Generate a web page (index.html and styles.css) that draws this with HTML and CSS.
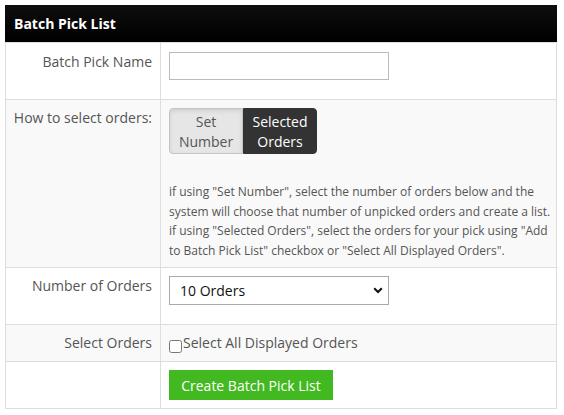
FILE: index.html
```html
<!DOCTYPE html>
<html>
<head>
<meta charset="utf-8">
<link rel="stylesheet" href="styles.css">
</head>
<body>
<div class="page">
  <div class="panel">
    <div class="panel-head">Batch Pick List</div>
    <div class="panel-body">
      <div class="row row-first">
        <div class="label">Batch Pick Name</div>
        <div class="value value-tall"><input class="text-input" type="text"></div>
      </div>
      <div class="row row-alt">
        <div class="label">How to select orders:</div>
        <div class="value value-help">
          <div class="btn-group">
            <span class="toggle toggle-off">Set Number</span><span class="toggle toggle-on">Selected Orders</span>
          </div>
          <p class="help">if using "Set Number", select the number of orders below and the system will choose that number of unpicked orders and create a list. if using "Selected Orders", select the orders for your pick using "Add to Batch Pick List" checkbox or "Select All Displayed Orders".</p>
        </div>
      </div>
      <div class="row">
        <div class="label">Number of Orders</div>
        <div class="value value-tall">
          <div class="select-wrap">
            <select class="select"><option>10 Orders</option><option>20 Orders</option></select>
            <svg class="chevron" width="10" height="7" viewBox="0 0 10 7"><path d="M1.2 1.3 L5 5 L8.8 1.3" fill="none" stroke="#111" stroke-width="2.1"/></svg>
          </div>
        </div>
      </div>
      <div class="row row-alt">
        <div class="label">Select Orders</div>
        <div class="value"><label class="check"><input type="checkbox" class="checkbox">Select All Displayed Orders</label></div>
      </div>
      <div class="row">
        <div class="label"></div>
        <div class="value"><button class="btn-create">Create Batch Pick List</button></div>
      </div>
    </div>
  </div>
</div>
</body>
</html>
```
FILE: styles.css
```css
* { box-sizing: border-box; }
html, body { margin: 0; padding: 0; background: #fff; }
body {
  font-family: "Open Sans", "Liberation Sans", sans-serif;
  font-size: 14px;
  line-height: 20px;
  color: #555;
}
.page { padding: 5px; }
.panel { width: 552px; }
.panel-head {
  height: 37px;
  display: flex;
  align-items: center;
  padding-left: 9px;
  background: linear-gradient(#0e0e0e, #000);
  color: #fff;
  font-weight: bold;
  font-size: 14px;
}
.panel-body {
  border: 1px solid #ddd;
  border-top: none;
}
.row {
  display: grid;
  grid-template-columns: 155px 1fr;
  border-top: 1px solid #ddd;
  background: #fff;
}
.row-alt { background: #f9f9f9; }
.label {
  border-right: 1px solid #ddd;
  text-align: right;
  padding: 8px 8px 8px 2px;
  white-space: nowrap;
}
.value { padding: 8px; }
.row-first .label, .row-first .value { padding-top: 9px; }
.value-tall { padding-bottom: 19px; }
.value-help { padding-bottom: 7px; }
.text-input {
  display: block;
  width: 220px;
  height: 28px;
  border: 1px solid #bbb;
  border-radius: 0;
  margin: 0;
  padding: 0 6px;
  font: inherit;
}
.btn-group { display: flex; }
.toggle {
  width: 74px;
  height: 46px;
  padding: 3px 6px;
  text-align: center;
  font-size: 14px;
  line-height: 20px;
  border: 1px solid;
}
.toggle-off {
  background: #e6e6e6;
  border-color: #c4c4c4;
  color: #555;
  border-radius: 4px 0 0 4px;
  box-shadow: inset 0 2px 4px rgba(0,0,0,0.1);
}
.toggle-on {
  background: #333;
  border-color: #333;
  color: #fff;
  border-radius: 0 4px 4px 0;
}
.help {
  margin: 28px -6px 0 0;
  font-size: 12px;
  line-height: 19.5px;
  color: #555;
}
.select-wrap {
  position: relative;
  width: 220px;
  height: 29px;
}
.select {
  display: block;
  width: 220px;
  height: 29px;
  margin: 0;
  border: 1px solid #aaa;
  border-radius: 0;
  background: #fff;
  -webkit-appearance: none;
  appearance: none;
  padding: 0 0 0 10px;
  font-family: "Open Sans", "Liberation Sans", sans-serif;
  font-size: 14px;
  color: #111;
}
.chevron {
  position: absolute;
  right: 6px;
  top: 11px;
  pointer-events: none;
}
.check { display: inline-block; color: #555; }
.checkbox {
  width: 13px;
  height: 13px;
  margin: 0 1px 0 0;
  vertical-align: -5px;
}
.btn-create {
  display: block;
  height: 30px;
  width: 164px;
  margin: 0;
  padding: 0;
  border: none;
  border-radius: 0;
  background: #43b921;
  color: #fff;
  font-family: "Open Sans", "Liberation Sans", sans-serif;
  font-size: 14px;
}
```
